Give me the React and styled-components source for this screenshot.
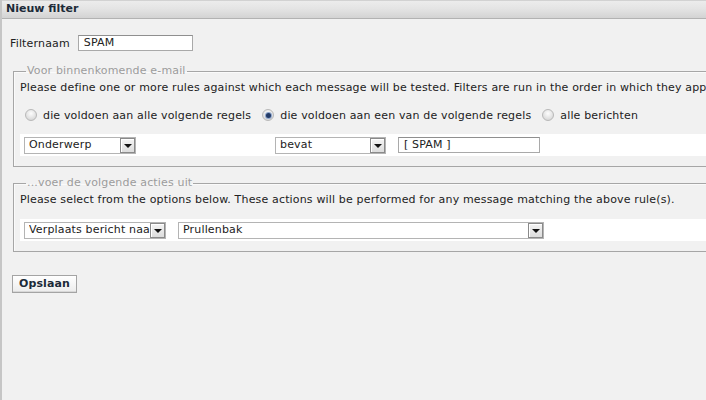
import React, { useState } from "react";
import styled, { createGlobalStyle } from "styled-components";

const GlobalStyle = createGlobalStyle`
  html, body {
    margin: 0;
    padding: 0;
    background: #f1f1f1;
    overflow: hidden;
  }
  body {
    font-family: "DejaVu Sans", Verdana, sans-serif;
    font-size: 11px;
    letter-spacing: 0.16px;
    color: #222;
  }
`;

const Page = styled.div`
  width: 900px;
  min-height: 400px;
  border-left: 2px solid #c6c6c6;
  box-sizing: border-box;
`;

const TitleBar = styled.div`
  height: 19px;
  line-height: 16px;
  padding-left: 4px;
  border-top: 1px solid #d2d2d2;
  border-bottom: 1px solid #b2b2b2;
  background: linear-gradient(#ececec, #e4e4e4 45%, #d3d3d3);
  font-weight: bold;
  letter-spacing: 0;
  color: #1c2a38;
  box-sizing: border-box;
`;

const Body = styled.div`
  padding: 16px 0 0 8px;
`;

const NameRow = styled.div`
  display: flex;
  align-items: center;
  gap: 8px;
  height: 16px;
`;

const TextInput = styled.div`
  width: ${(p) => p.width}px;
  height: 16px;
  box-sizing: border-box;
  border: 1px solid #a9a9a9;
  border-top-color: #8f8f8f;
  background: #fff;
  padding-left: 5px;
  line-height: 14px;
  white-space: nowrap;
  overflow: hidden;
`;

const Fieldset = styled.fieldset`
  margin: ${(p) => p.top}px 0 0 3px;
  padding: 3px 0 ${(p) => p.bottom}px 6px;
  border: none;
  border-top: 1px solid #a6a6a6;
  border-left: 1px solid #a6a6a6;
  border-bottom: 1px solid #a6a6a6;
  box-shadow: inset 1px 1px 0 #fafafa;
  min-width: 0;
`;

const Legend = styled.legend`
  color: #9c9c9c;
  padding: 0 1px;
  margin-left: 6px;
  line-height: 14px;
`;

const Text = styled.div`
  line-height: 14px;
  white-space: nowrap;
`;

const RadioRow = styled.div`
  display: flex;
  align-items: center;
  margin: 13px 0 0 5px;
  height: 14px;
`;

const RadioLabel = styled.label`
  display: flex;
  align-items: center;
  gap: 6px;
  margin-right: 11px;
  white-space: nowrap;
`;

const RadioDot = styled.span`
  width: 12px;
  height: 12px;
  border-radius: 50%;
  box-sizing: border-box;
  border: 1px solid #b8b8b8;
  background: radial-gradient(circle at 50% 35%, #fdfdfd, #d8d8d8 80%);
  display: flex;
  align-items: center;
  justify-content: center;
  &::after {
    content: "";
    width: 5px;
    height: 5px;
    border-radius: 50%;
    background: ${(p) => (p.checked ? "#233a66" : "transparent")};
    box-shadow: ${(p) => (p.checked ? "0 0 0 1px #8ea6cc" : "none")};
  }
`;

const Band = styled.div`
  display: flex;
  align-items: center;
  height: 22px;
  margin-top: ${(p) => p.top}px;
  padding-left: 4px;
  background: #fff;
`;

const SelectBox = styled.div`
  display: flex;
  align-items: center;
  width: ${(p) => p.width}px;
  height: 17px;
  margin-right: ${(p) => p.gap || 0}px;
  box-sizing: border-box;
  border: 1px solid #b4b4b4;
  background: #fff;
  padding-left: 4px;
`;

const SelectText = styled.span`
  flex: 1;
  overflow: hidden;
  white-space: nowrap;
  line-height: 14px;
`;

const ArrowButton = styled.span`
  width: 15px;
  height: 15px;
  box-sizing: border-box;
  border: 1px solid #8a8a8a;
  background: linear-gradient(#f4f4f4, #dcdcdc);
  box-shadow: inset 1px 1px 0 #fff;
  display: flex;
  align-items: center;
  justify-content: center;
  &::after {
    content: "";
    border-left: 4px solid transparent;
    border-right: 4px solid transparent;
    border-top: 4px solid #111;
    margin-top: 2px;
  }
`;

const Button = styled.button`
  margin-top: 23px;
  margin-left: 2px;
  height: 18px;
  padding: 0 6px;
  font-family: inherit;
  font-size: 11px;
  font-weight: bold;
  letter-spacing: 0.1px;
  color: #1c2a38;
  border: 1px solid #a4a4a4;
  background: linear-gradient(#ffffff, #ececec);
  box-shadow: inset 0 -1px 0 #d8d8d8;
  line-height: 14px;
`;

const Select = ({ width, gap, value }) => (
  <SelectBox width={width} gap={gap}>
    <SelectText>{value}</SelectText>
    <ArrowButton />
  </SelectBox>
);

export default function App() {
  const [match, setMatch] = useState("any");
  const options = [
    ["all", "die voldoen aan alle volgende regels"],
    ["any", "die voldoen aan een van de volgende regels"],
    ["none", "alle berichten"],
  ];

  return (
    <>
      <GlobalStyle />
      <Page>
        <TitleBar>Nieuw filter</TitleBar>
        <Body>
          <NameRow>
            <span>Filternaam</span>
            <TextInput width={115}>SPAM</TextInput>
          </NameRow>

          <Fieldset top={13} bottom={10}>
            <Legend>Voor binnenkomende e-mail</Legend>
            <Text>
              Please define one or more rules against which each message will be
              tested. Filters are run in the order in which they appear.
            </Text>
            <RadioRow>
              {options.map(([key, label]) => (
                <RadioLabel key={key} onClick={() => setMatch(key)}>
                  <RadioDot checked={match === key} />
                  {label}
                </RadioLabel>
              ))}
            </RadioRow>
            <Band top={12}>
              <Select width={112} gap={139} value="Onderwerp" />
              <Select width={111} gap={12} value="bevat" />
              <TextInput width={142}>[ SPAM ]</TextInput>
            </Band>
          </Fieldset>

          <Fieldset top={9} bottom={10}>
            <Legend>...voer de volgende acties uit</Legend>
            <Text>
              Please select from the options below. These actions will be
              performed for any message matching the above rule(s).
            </Text>
            <Band top={12}>
              <Select width={142} gap={12} value="Verplaats bericht naar" />
              <Select width={366} value="Prullenbak" />
            </Band>
          </Fieldset>

          <Button>Opslaan</Button>
        </Body>
      </Page>
    </>
  );
}
